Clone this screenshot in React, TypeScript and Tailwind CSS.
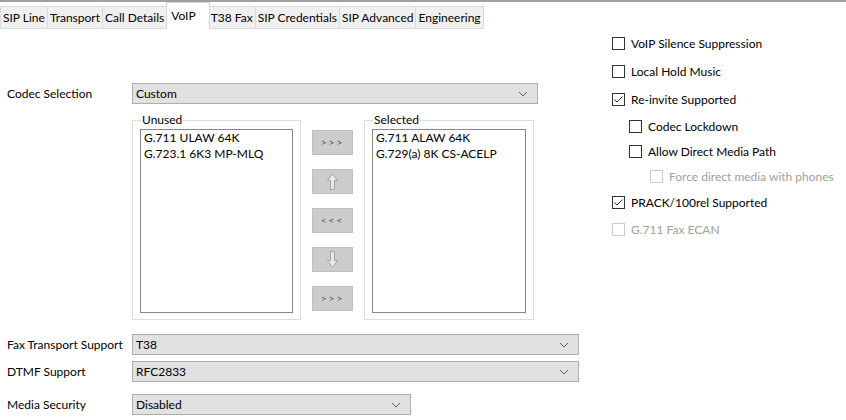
import { FC } from "react";

const tabs = [
  "SIP Line",
  "Transport",
  "Call Details",
  "VoIP",
  "T38 Fax",
  "SIP Credentials",
  "SIP Advanced",
  "Engineering",
];

const Chevron = () => (
  <svg width="10" height="6" viewBox="0 0 10 6" className="shrink-0">
    <path d="M1 1 L5 5 L9 1" fill="none" stroke="#606060" strokeWidth="1" />
  </svg>
);

const Select: FC<{ value: string; width: string; height?: string }> = ({
  value,
  width,
  height = "h-[21px]",
}) => (
  <div
    className={`${width} ${height} flex items-center justify-between border border-[#adadad] bg-[#e1e1e1] pl-[3px] pr-[9px]`}
  >
    <span>{value}</span>
    <Chevron />
  </div>
);

const Row: FC<{ label: string; value: string; width: string; className?: string }> = ({
  label,
  value,
  width,
  className,
}) => (
  <div className={`flex items-center ${className ?? ""}`}>
    <div className="w-[132px] pl-[7px]">{label}</div>
    <Select value={value} width={width} />
  </div>
);

const GroupBox: FC<{ title: string; items: string[]; width: string; listWidth: string }> = ({
  title,
  items,
  width,
  listWidth,
}) => (
  <fieldset className={`${width} border border-[#dcdcdc] px-[7px] pb-[6px] pt-[2px]`}>
    <legend className="ml-[1px] px-[1px] leading-[14px]">{title}</legend>
    <div className={`${listWidth} h-[184px] border border-[#828790] bg-white px-[3px]`}>
      {items.map((it, idx) => (
        <div key={idx} className="leading-[16px]">
          {it}
        </div>
      ))}
    </div>
  </fieldset>
);

// outlined block arrow, greyed out like a disabled button glyph
const ArrowIcon: FC<{ down?: boolean }> = ({ down }) => (
  <svg width="13" height="19" viewBox="0 0 13 19" className={down ? "rotate-180" : ""}>
    <path
      d="M6.5 1.5 L11.5 8.5 L8.5 8.5 L8.5 17.5 L4.5 17.5 L4.5 8.5 L1.5 8.5 Z"
      fill="#e8e8e8"
      stroke="#a4a4a4"
      strokeWidth="1"
    />
  </svg>
);

const MoveButton: FC<{ label?: string; arrow?: "up" | "down" }> = ({ label, arrow }) => (
  <div className="flex h-[25px] w-[41px] items-center justify-center border border-[#bfbfbf] bg-[#cccccc] text-[10px] tracking-[2px] text-[#555]">
    {label}
    {arrow && <ArrowIcon down={arrow === "down"} />}
  </div>
);

const Check: FC<{
  label: string;
  checked?: boolean;
  disabled?: boolean;
  indent?: string;
}> = ({ label, checked, disabled, indent = "" }) => (
  <div className={`flex h-[13px] items-center gap-[6px] ${indent}`}>
    <div
      className={`flex h-[13px] w-[13px] items-center justify-center border bg-white ${
        disabled ? "border-[#cccccc]" : "border-[#333333]"
      }`}
    >
      {checked && (
        <svg width="11" height="11" viewBox="0 0 11 11">
          <path d="M1.5 5.5 L4 8 L9.5 2.5" fill="none" stroke="#333" strokeWidth="1" />
        </svg>
      )}
    </div>
    <span className={disabled ? "text-[#a0a0a0]" : "text-black"}>{label}</span>
  </div>
);

export default function App() {
  return (
    <div className="h-[420px] w-[846px] overflow-hidden bg-white font-['Lato','Liberation_Sans',sans-serif] text-[12px] text-black">
      <div className="h-[2px] bg-[#a0a0a0]" />
      <div className="flex h-[27px] items-end">
        {tabs.map((t) =>
          t === "VoIP" ? (
            <div
              key={t}
              className="relative z-10 -mx-[1px] flex h-[27px] items-start border border-b-0 border-[#d9d9d9] bg-white pl-[4px] pr-[13px] pt-[4px]"
            >
              {t}
            </div>
          ) : (
            <div
              key={t}
              className="flex h-[23px] items-center border border-l-0 border-[#d9d9d9] bg-[#f0f0f0] px-[2px] first:border-l"
            >
              {t}
            </div>
          )
        )}
      </div>

      <div className="flex">
        <div className="w-[600px] pt-[54px]">
          <Row label="Codec Selection" value="Custom" width="w-[406px]" />

          <div className="mt-[9px] flex items-start pl-[132px]">
            <GroupBox
              title="Unused"
              items={["G.711 ULAW 64K", "G.723.1 6K3 MP-MLQ"]}
              width="w-[169px]"
              listWidth="w-[153px]"
            />
            <div className="mx-[11px] mt-[17px] flex flex-col gap-[14px]">
              <MoveButton label=">>>" />
              <MoveButton arrow="up" />
              <MoveButton label="<<<" />
              <MoveButton arrow="down" />
              <MoveButton label=">>>" />
            </div>
            <GroupBox
              title="Selected"
              items={["G.711 ALAW 64K", "G.729(a) 8K CS-ACELP"]}
              width="w-[170px]"
              listWidth="w-[154px]"
            />
          </div>

          <Row label="Fax Transport Support" value="T38" width="w-[447px]" className="mt-[14px]" />
          <Row label="DTMF Support" value="RFC2833" width="w-[447px]" className="mt-[6px]" />
          <Row label="Media Security" value="Disabled" width="w-[279px]" className="mt-[12px]" />
        </div>

        <div className="flex flex-col pl-[12px] pt-[8px]">
          <Check label="VoIP Silence Suppression" />
          <Check label="Local Hold Music" indent="mt-[15px]" />
          <Check label="Re-invite Supported" checked indent="mt-[15px]" />
          <Check label="Codec Lockdown" indent="mt-[14px] ml-[17px]" />
          <Check label="Allow Direct Media Path" indent="mt-[12px] ml-[17px]" />
          <Check label="Force direct media with phones" disabled indent="mt-[12px] ml-[38px]" />
          <Check label="PRACK/100rel Supported" checked indent="mt-[13px]" />
          <Check label="G.711 Fax ECAN" disabled indent="mt-[14px]" />
        </div>
      </div>
    </div>
  );
}
